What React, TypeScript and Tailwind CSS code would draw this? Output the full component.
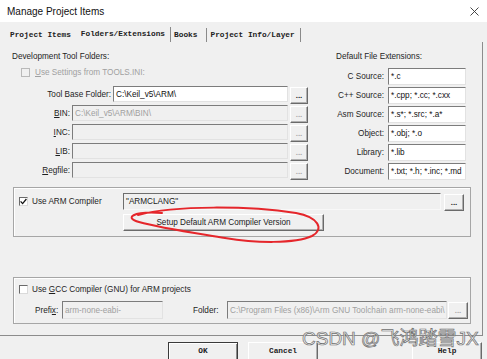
const sunken = "border border-t-[#7c7c7c] border-l-[#7c7c7c] border-r-[#e2e2e2] border-b-[#e2e2e2]";
const raised = "border border-t-white border-l-white border-r-[#6a6a6a] border-b-[#6a6a6a] shadow-[inset_-1px_-1px_0_#b0b0b0]";
const mono = "font-['Liberation_Mono','Courier_New',monospace] font-bold text-[7.8px]";

const Dots = ({ disabled = false, w = "w-[18px]" }: { disabled?: boolean; w?: string }) => (
    <div className={`${raised} ${w} h-[17px] mt-[1px] shrink-0 flex items-end justify-center pb-[3px] text-[8px] leading-none font-bold ${disabled ? "text-[#a8a8a8]" : "text-[#222]"}`}>...</div>
);

const Check = ({ checked = false, disabled = false }: { checked?: boolean; disabled?: boolean }) => (
    <div className={`w-[9px] h-[9px] shrink-0 border flex items-center justify-center ${disabled ? "border-[#b9b9b9] bg-[#f0f0f0]" : "border-t-[#6a6a6a] border-l-[#6a6a6a] border-r-[#dadada] border-b-[#dadada] bg-white"}`}>
        {checked && (
            <svg width="7" height="7" viewBox="0 0 7 7">
                <path d="M0.6 3.4 L2.6 5.6 L6.4 1" stroke="#111" strokeWidth="1.3" fill="none" />
            </svg>
        )}
    </div>
);

const FolderRow = ({ label, lw, value, enabled = false }: { label: React.ReactNode; lw: string; value?: string; enabled?: boolean }) => (
    <div className="h-[16px] flex items-start">
        <div className={`${lw} h-[16px] flex items-center justify-end whitespace-nowrap`}>{label}</div>
        <div className={`${sunken} ml-[2px] flex-1 h-[16px] flex items-center px-[2px] whitespace-nowrap overflow-hidden ${enabled ? "bg-white text-[#111]" : "bg-[#f0f0f0] text-[#a0a0a0]"}`}>{value}</div>
        <div className="ml-[2px]"><Dots disabled={!enabled} /></div>
    </div>
);

const ExtRow = ({ label, value }: { label: string; value: string }) => (
    <div className="h-[17px] flex items-center">
        <div className="w-[48px] flex justify-end whitespace-nowrap">{label}</div>
        <div className={`${sunken} ml-[4px] w-[78px] h-[17px] bg-white flex items-center px-[2px] whitespace-nowrap overflow-hidden text-[#111]`}>{value}</div>
    </div>
);

const BottomBtn = ({ text, def = false, ml = "" }: { text: string; def?: boolean; ml?: string }) => (
    <div className={`${ml} w-[70px] h-[20px] flex justify-center pt-[3px] ${mono} text-[#222] ${def ? "border border-[#3a3a3a] shadow-[inset_1px_1px_0_#fff,inset_-1px_-1px_0_#8a8a8a]" : raised}`}>{text}</div>
);

export default function App() {
    return (
        <div className="relative w-[487px] h-[359px] overflow-hidden bg-[#f0f0f0] text-[#1e1e1e] font-['Liberation_Sans',Arial,sans-serif] text-[8.2px] leading-[11px]">
            <div className="h-[22px] bg-white flex items-center justify-between pl-[7px] pr-[8px]">
                <span className="text-[10px] text-[#111]">Manage Project Items</span>
                <svg width="9" height="9" viewBox="0 0 9 9">
                    <path d="M0.5 0.5 L8.5 8.5 M8.5 0.5 L0.5 8.5" stroke="#333" strokeWidth="0.9" />
                </svg>
            </div>

            <div className={`h-[20px] flex items-end ${mono} text-[#222]`}>
                <div className="ml-[10px] h-[14px] flex items-center">Project Items</div>
                <div className="ml-[10px] h-[15px] pr-[5px] flex items-start pt-[2px] border-r border-[#8a8a8a]">Folders/Extensions</div>
                <div className="h-[14px] pl-[3px] pr-[9px] flex items-center border-r border-[#8a8a8a]">Books</div>
                <div className="h-[14px] pl-[3px] pr-[5px] flex items-center border-r border-[#8a8a8a]">Project Info/Layer</div>
            </div>

            <div className="h-[294px] w-[483px] border-r border-b border-[#8c8c8c] pt-[9px] pl-[12px]">
                <div className="flex">
                    <div className="w-[296px] flex flex-col">
                        <div>Development Tool Folders:</div>
                        <div className="mt-[4px] h-[12px] flex items-center pl-[9px] gap-[5px] text-[#a0a0a0]">
                            <Check disabled />
                            <span><u>U</u>se Settings from TOOLS.INI:</span>
                        </div>
                        <div className="mt-[8px] flex flex-col gap-[3px]">
                            <FolderRow lw="w-[99px]" label="Tool Base Folder:" value="C:\Keil_v5\ARM\" enabled />
                            <FolderRow lw="w-[58px]" label={<span><u>B</u>IN:</span>} value="C:\Keil_v5\ARM\BIN\" />
                            <FolderRow lw="w-[58px]" label={<span><u>I</u>NC:</span>} />
                            <FolderRow lw="w-[58px]" label={<span><u>L</u>IB:</span>} />
                            <FolderRow lw="w-[58px]" label={<span><u>R</u>egfile:</span>} />
                        </div>
                    </div>
                    <div className="ml-[28px] w-[130px] flex flex-col">
                        <div>Default File Extensions:</div>
                        <div className="mt-[6px] flex flex-col gap-[2px]">
                            <ExtRow label="C Source:" value="*.c" />
                            <ExtRow label="C++ Source:" value="*.cpp; *.cc; *.cxx" />
                            <ExtRow label="Asm Source:" value="*.s*; *.src; *.a*" />
                            <ExtRow label="Object:" value="*.obj; *.o" />
                            <ExtRow label="Library:" value="*.lib" />
                            <ExtRow label="Document:" value="*.txt; *.h; *.inc; *.md" />
                        </div>
                    </div>
                </div>

                <div className="mt-[7px] ml-[1px] w-[458px] h-[50px] border border-[#a6a6a6] shadow-[inset_1px_1px_0_#fff] pt-[5px] pl-[5px]">
                    <div className="h-[17px] flex items-center">
                        <div className="w-[104px] flex items-center gap-[4px]">
                            <Check checked />
                            <span>Use ARM Compiler</span>
                        </div>
                        <div className="w-[318px] h-[17px] border border-t-[#6e6e6e] border-l-[#6e6e6e] border-r-[#f8f8f8] border-b-[#f8f8f8] flex items-center px-[2px] text-[#222]">"ARMCLANG"</div>
                        <div className="ml-[3px]"><Dots w="w-[20px]" /></div>
                    </div>
                    <div className={`${raised} mt-[4px] ml-[104px] w-[201px] h-[17px] flex items-center justify-center text-[#222]`}>Setup Default ARM Compiler Version</div>
                </div>

                <div className="mt-[40px] ml-[1px] w-[458px] h-[47px] border border-[#a6a6a6] shadow-[inset_1px_1px_0_#fff] pt-[5px] pl-[5px]">
                    <div className="h-[12px] flex items-center gap-[4px]">
                        <Check />
                        <span>Use <u>G</u>CC Compiler (GNU) for ARM projects</span>
                    </div>
                    <div className="mt-[6px] h-[18px] flex items-center">
                        <div className="ml-[16px] w-[27px]">Prefi<u>x</u>:</div>
                        <div className={`${sunken} w-[101px] h-[18px] flex items-center px-[2px] text-[#a0a0a0]`}>arm-none-eabi-</div>
                        <div className="ml-[30px] w-[34px]">Folder:</div>
                        <div className={`${sunken} w-[220px] h-[18px] flex items-center px-[2px] whitespace-nowrap overflow-hidden text-[#a0a0a0]`}>C:\Program Files (x86)\Arm GNU Toolchain arm-none-eabi\</div>
                        <div className="ml-[1px]"><Dots disabled w="w-[20px]" /></div>
                    </div>
                </div>
            </div>

            <div className="mt-[6px] flex pl-[168px]">
                <BottomBtn text="OK" def />
                <BottomBtn text="Cancel" ml="ml-[10px]" />
                <BottomBtn text="Help" ml="ml-[94px]" />
            </div>

            <div className="absolute left-[302px] top-[329px] text-[19px] leading-none whitespace-nowrap text-[#f6f6f6]/80 [-webkit-text-stroke:0.7px_#6e6e6e] font-['Liberation_Sans','Noto_Sans_CJK_SC',sans-serif]">
                CSDN @飞鸿踏雪JX
            </div>

            <svg className="absolute left-0 top-0 pointer-events-none" width="487" height="359" viewBox="0 0 487 359">
                <path
                    d="M138 215 C 175 205, 250 206, 296 213 C 318 217, 325 229, 312 236 C 295 244, 255 243, 225 238 C 195 233, 160 228, 139 222 C 124 218, 132 211, 162 213"
                    stroke="#e5262b"
                    strokeWidth="2"
                    fill="none"
                    strokeLinecap="round"
                />
            </svg>
        </div>
    );
}
